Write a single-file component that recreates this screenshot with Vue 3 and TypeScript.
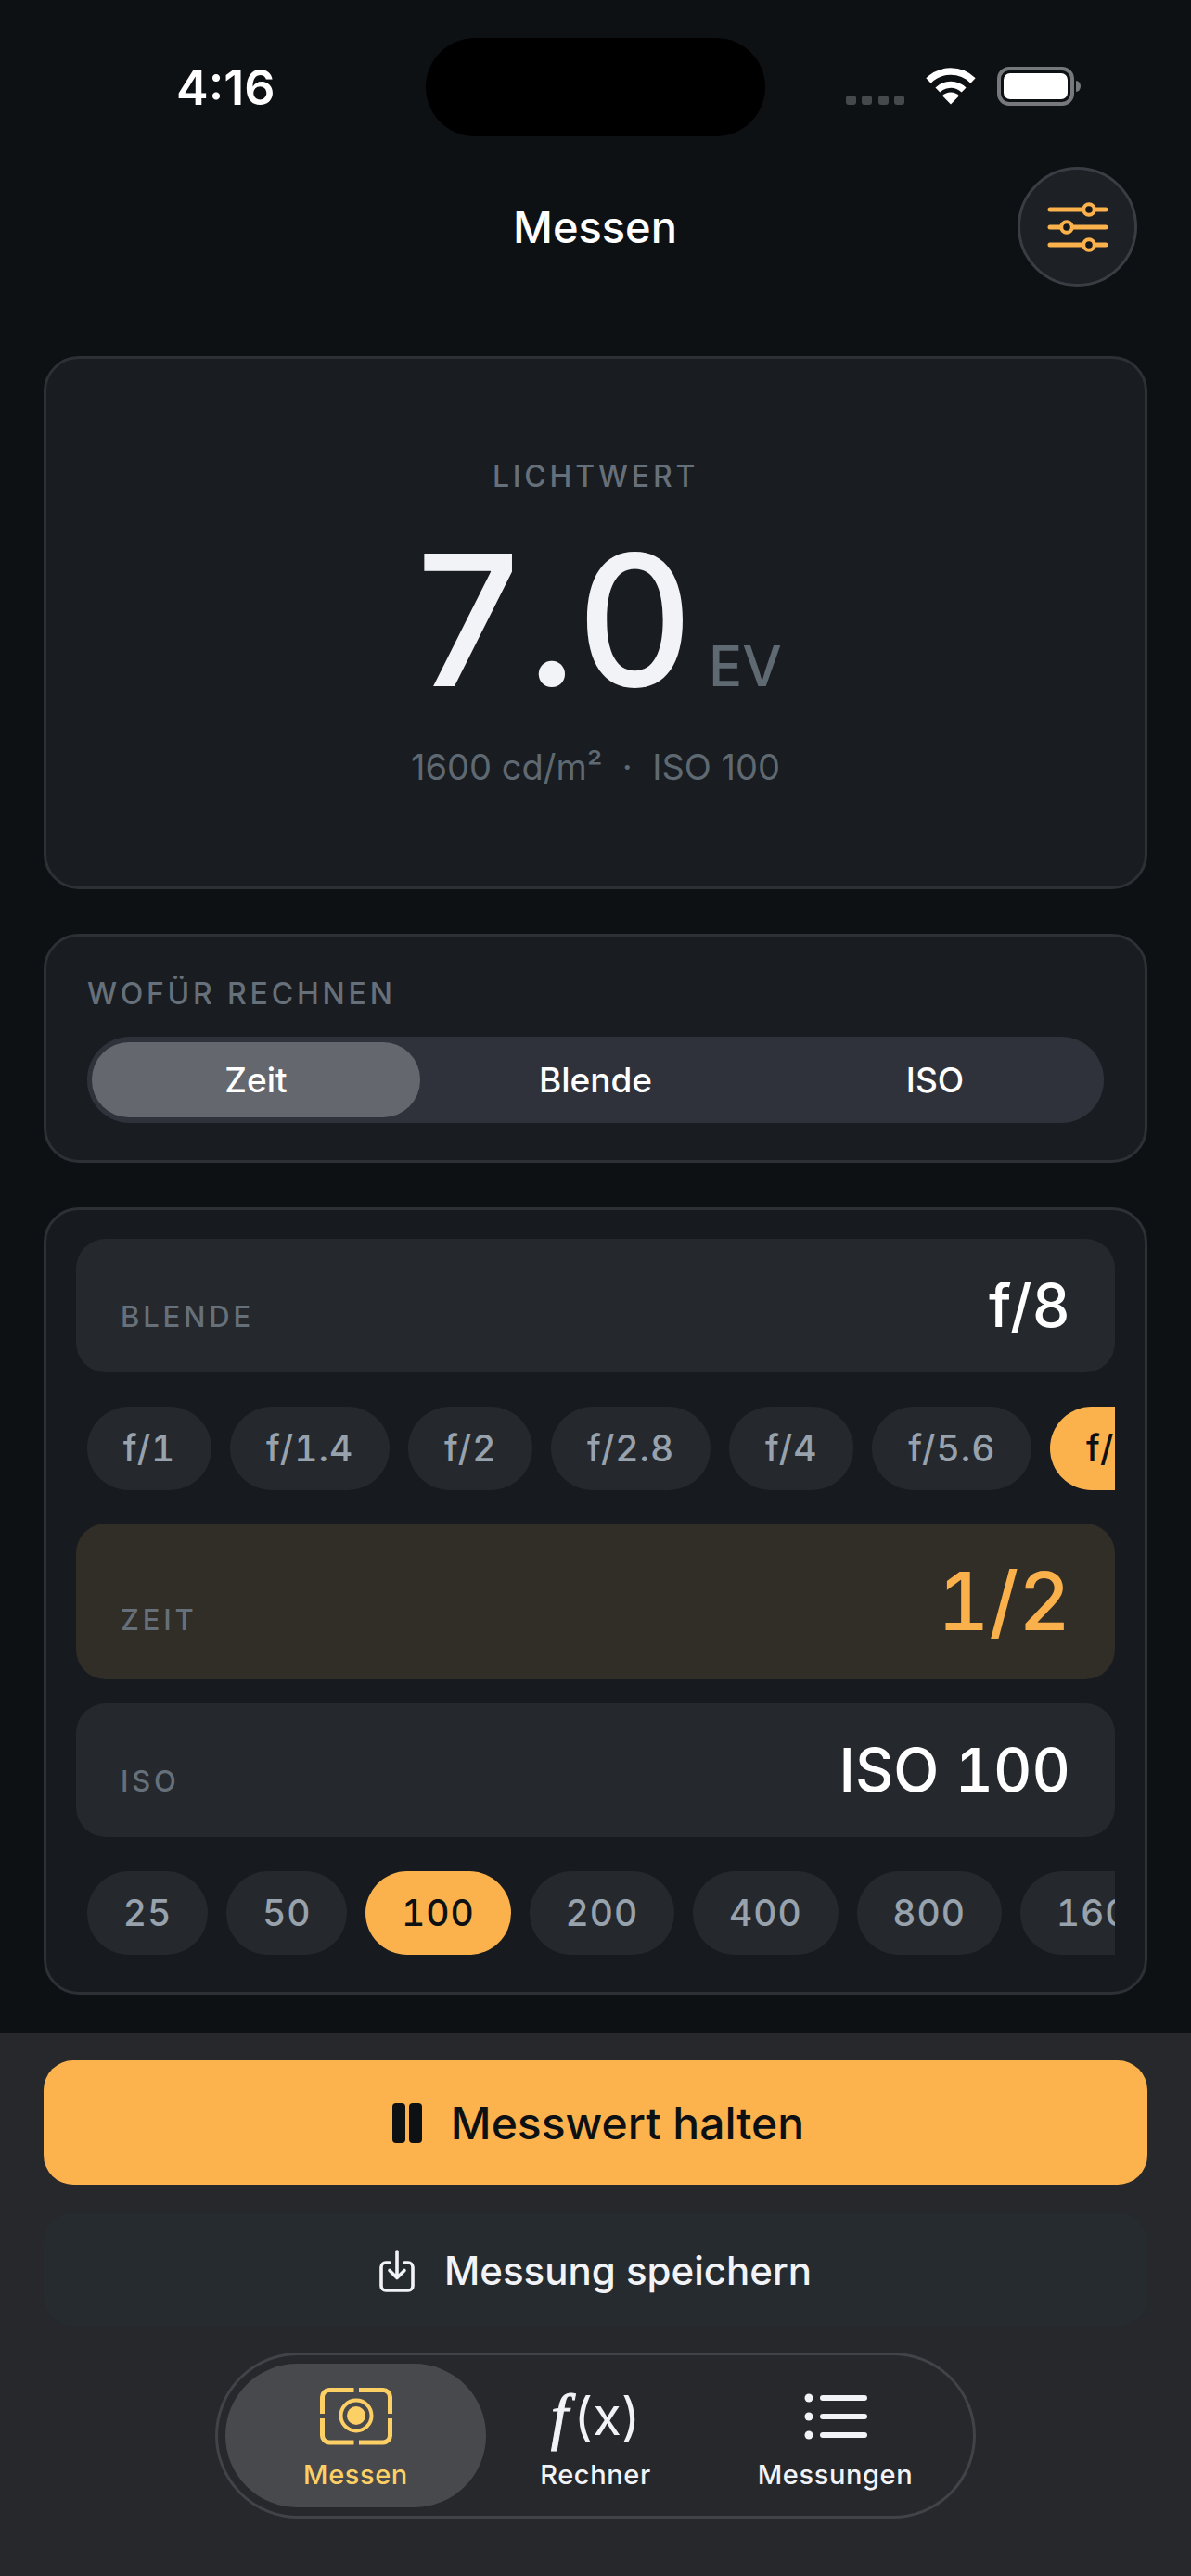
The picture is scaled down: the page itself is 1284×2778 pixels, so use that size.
<script setup lang="ts">
interface Chip {
  label: string;
  active?: boolean;
}

// Values offered below the aperture and ISO rows.
const apertures: Chip[] = [
  { label: 'f/1' },
  { label: 'f/1.4' },
  { label: 'f/2' },
  { label: 'f/2.8' },
  { label: 'f/4' },
  { label: 'f/5.6' },
  { label: 'f/8', active: true },
];

const isoValues: Chip[] = [
  { label: '25' },
  { label: '50' },
  { label: '100', active: true },
  { label: '200' },
  { label: '400' },
  { label: '800' },
  { label: '1600' },
];

const modes = ['Zeit', 'Blende', 'ISO'];
</script>

<template>
  <div class="app">
    <div class="status">
      <span class="time">4:16</span>
      <div class="island"></div>
      <div class="status-icons">
        <div class="signal">
          <i v-for="n in 4" :key="n"></i>
        </div>
        <svg class="wifi" width="56" height="41" viewBox="0 0 56 41" fill="none">
          <path d="M4 15A34 34 0 0 1 52 15" stroke="#fff" stroke-width="7.5" />
          <path d="M13.9 25A20 20 0 0 1 42.1 25" stroke="#fff" stroke-width="7" />
          <path d="M28 40.5L19 31.2A12.8 12.8 0 0 1 37 31.2Z" fill="#fff" />
        </svg>
        <svg class="battery" width="90" height="42" viewBox="0 0 90 42" fill="none">
          <rect x="2" y="2" width="79" height="38" rx="11" stroke="#77787b" stroke-width="4" />
          <rect x="7" y="7" width="69" height="28" rx="7" fill="#fff" />
          <path d="M85 15a5 6 0 0 1 5 6a5 6 0 0 1-5 6Z" fill="#77787b" />
        </svg>
      </div>
    </div>

    <header class="header">
      <span></span>
      <h1 class="title">Messen</h1>
      <button class="settings" aria-label="Einstellungen">
        <svg width="66" height="54" viewBox="0 0 66 54" fill="none">
          <path d="M3 8H63M3 27H63M3 46H63" stroke="#fbb24c" stroke-width="5" stroke-linecap="round" />
          <circle cx="45" cy="8" r="5.800" fill="#15181c" stroke="#fbb24c" stroke-width="4" />
          <circle cx="21" cy="27" r="5.800" fill="#15181c" stroke="#fbb24c" stroke-width="4" />
          <circle cx="45" cy="46" r="5.800" fill="#15181c" stroke="#fbb24c" stroke-width="4" />
        </svg>
      </button>
    </header>

    <main class="content">
      <section class="card hero">
        <div class="caption">LICHTWERT</div>
        <div class="reading">
          <span class="ev">7.0</span>
          <span class="unit">EV</span>
        </div>
        <div class="meta">1600 cd/m²&nbsp; · &nbsp;ISO 100</div>
      </section>

      <section class="card mode">
        <div class="caption">WOFÜR RECHNEN</div>
        <div class="segments">
          <div v-for="(m, i) in modes" :key="m" class="segment" :class="{ on: i === 0 }">{{ m }}</div>
        </div>
      </section>

      <section class="card inputs">
        <div class="row">
          <span class="row-label">BLENDE</span>
          <span class="row-value">f/8</span>
        </div>
        <div class="chips">
          <span v-for="c in apertures" :key="c.label" class="chip" :class="{ on: c.active }">{{ c.label }}</span>
        </div>
        <div class="row result">
          <span class="row-label">ZEIT</span>
          <span class="row-value">1/2</span>
        </div>
        <div class="row">
          <span class="row-label">ISO</span>
          <span class="row-value">ISO 100</span>
        </div>
        <div class="chips">
          <span v-for="c in isoValues" :key="c.label" class="chip" :class="{ on: c.active }">{{ c.label }}</span>
        </div>
      </section>
    </main>

    <footer class="panel">
      <button class="btn hold">
        <span class="pause"><i></i><i></i></span>
        Messwert halten
      </button>
      <button class="btn save">
        <svg width="38" height="46" viewBox="0 0 38 46" fill="none">
          <path d="M11 14H7a5 5 0 0 0-5 5V39a5 5 0 0 0 5 5H31a5 5 0 0 0 5-5V19a5 5 0 0 0-5-5H27" stroke="#f2f3f7" stroke-width="3.600" stroke-linecap="round" />
          <path d="M19 2V30M11 22.500L19 30.500L27 22.500" stroke="#f2f3f7" stroke-width="3.600" stroke-linecap="round" stroke-linejoin="round" />
        </svg>
        Messung speichern
      </button>

      <nav class="tabs">
        <div class="tab on">
          <div class="tab-icon">
            <svg width="78" height="62" viewBox="0 0 78 62" fill="none">
              <path d="M2.500 28V10A7.500 7.500 0 0 1 10 2.500H36.500M42 2.500H68A7.500 7.500 0 0 1 75.500 10V28M75.500 33V51.500A7.500 7.500 0 0 1 68 59H42M36.500 59H10A7.500 7.500 0 0 1 2.500 51.500V33" stroke="#fdd066" stroke-width="5" />
              <circle cx="39" cy="30" r="16.500" stroke="#fdd066" stroke-width="4" />
              <circle cx="39" cy="30" r="10" fill="#fdd066" />
            </svg>
          </div>
          <span class="tab-label">Messen</span>
        </div>
        <div class="tab">
          <div class="tab-icon fx"><span class="fx-f">f</span>(x)</div>
          <span class="tab-label">Rechner</span>
        </div>
        <div class="tab">
          <div class="tab-icon">
            <svg width="68" height="50" viewBox="0 0 68 50" fill="none">
              <circle cx="5" cy="5" r="4.500" fill="#f2f3f7" />
              <circle cx="5" cy="25" r="4.500" fill="#f2f3f7" />
              <circle cx="5" cy="45" r="4.500" fill="#f2f3f7" />
              <path d="M20 5H65M20 25H65M20 45H65" stroke="#f2f3f7" stroke-width="6" stroke-linecap="round" />
            </svg>
          </div>
          <span class="tab-label">Messungen</span>
        </div>
      </nav>
    </footer>
  </div>
</template>

<style>
html,
body {
  background: #0d1114;
}
</style>

<style scoped>
.app {
  width: 1284px;
  height: 2778px;
  display: flex;
  flex-direction: column;
  overflow: hidden;
  background: #0d1114;
  font-family: Inter, "Liberation Sans", sans-serif;
  color: #f2f3f7;
}

.status {
  position: relative;
  height: 180px;
  box-sizing: border-box;
  padding: 68px 119px 0 190px;
  display: flex;
  justify-content: space-between;
  align-items: flex-start;
}

.time {
  font-size: 52px;
  line-height: 53px;
  font-weight: 600;
  color: #fff;
}

.island {
  position: absolute;
  left: 459px;
  top: 41px;
  width: 366px;
  height: 106px;
  border-radius: 53px;
  background: #000;
}

.status-icons {
  margin-top: 4px;
  display: flex;
  gap: 22px;
  align-items: flex-start;
}

.signal {
  margin-top: 31px;
  display: flex;
  gap: 6.5px;
}

.signal i {
  width: 11px;
  height: 10px;
  border-radius: 3px;
  background: #45494c;
}

.header {
  height: 128px;
  padding-right: 58px;
  margin-bottom: 76px;
  display: grid;
  grid-template-columns: 186px 1fr 129px;
  align-items: center;
}

.title {
  margin: 0;
  text-align: center;
  font-size: 47px;
  line-height: 56px;
  font-weight: 500;
  color: #fff;
}

.settings {
  width: 129px;
  height: 129px;
  box-sizing: border-box;
  padding: 0;
  border: 3px solid #3a3e44;
  border-radius: 50%;
  background: #1d2024;
  display: flex;
  align-items: center;
  justify-content: center;
}

.content {
  padding: 0 47px;
  display: flex;
  flex-direction: column;
  gap: 48px;
  font-variant-numeric: tabular-nums;
}

.card {
  box-sizing: border-box;
  border: 3px solid #2d3136;
  border-radius: 38px;
  background: #191c20;
}

.caption {
  font-size: 32px;
  line-height: 40px;
  font-weight: 500;
  letter-spacing: 3.8px;
  color: #66707a;
}

.hero {
  height: 575px;
  padding-top: 107px;
  display: flex;
  flex-direction: column;
  align-items: center;
}

.reading {
  margin-top: 35px;
  height: 200px;
  display: flex;
  align-items: baseline;
  gap: 16px;
}

.ev {
  font-size: 196px;
  line-height: 200px;
  font-weight: 540;
}

.unit {
  font-size: 60px;
  line-height: 62px;
  font-weight: 500;
  color: #5f6972;
}

.meta {
  margin-top: 34px;
  font-size: 38px;
  line-height: 48px;
  font-variant-numeric: normal;
  color: #5f6972;
}

.mode {
  height: 247px;
  padding: 42px 44px 0;
}

.segments {
  margin-top: 26px;
  height: 93px;
  box-sizing: border-box;
  padding: 6px 5px;
  border-radius: 46px;
  background: #2f323a;
  display: grid;
  grid-template-columns: repeat(3, 1fr);
  gap: 12px;
}

.segment {
  border-radius: 40px;
  text-align: center;
  font-size: 37px;
  line-height: 81px;
  font-weight: 450;
  color: #fff;
}

.segment.on {
  background: #64676e;
}

.inputs {
  height: 849px;
  padding: 31px 32px;
  background: #171a1f;
  display: flex;
  flex-direction: column;
  gap: 26px;
}

.row {
  height: 144px;
  flex: none;
  box-sizing: border-box;
  padding: 12px 48px 0;
  border-radius: 32px;
  background: #25292d;
  display: flex;
  justify-content: space-between;
  align-items: baseline;
}

.row-label {
  font-size: 31px;
  line-height: 40px;
  font-weight: 500;
  letter-spacing: 3.8px;
  color: #66707a;
}

.row-value {
  font-size: 64px;
  line-height: 120px;
  font-weight: 450;
  color: #fff;
}

.result {
  height: 168px;
  padding-top: 6px;
  background: #312d27;
}

.result .row-value {
  font-size: 86px;
  line-height: 156px;
  font-weight: 500;
  color: #fab14c;
}

.chips {
  flex: none;
  padding: 11px 0 10px 12px;
  display: flex;
  gap: 20px;
  overflow: hidden;
}

.chip {
  flex: none;
  height: 90px;
  padding: 0 38.800px;
  border-radius: 45px;
  background: #25292d;
  font-size: 39px;
  line-height: 90px;
  font-weight: 450;
  letter-spacing: 1px;
  color: #98a2ad;
}

.chip.on {
  background: #fbb24c;
  color: #0d1114;
}

.panel {
  margin-top: auto;
  height: 586px;
  box-sizing: border-box;
  padding: 30px 47px 0;
  background: #26282b;
  display: flex;
  flex-direction: column;
}

.btn {
  border: none;
  padding: 0;
  display: flex;
  align-items: center;
  justify-content: center;
  font-family: inherit;
  font-weight: 450;
}

.hold {
  height: 134px;
  padding-left: 6px;
  gap: 31px;
  border-radius: 32px;
  background: #fcb24d;
  color: #0d1114;
  font-size: 48px;
  font-weight: 550;
}

.pause {
  display: flex;
  gap: 4px;
}

.pause i {
  width: 14px;
  height: 43px;
  border-radius: 4px;
  background: #0d1114;
}

.save {
  margin-top: 30px;
  height: 123px;
  padding-top: 2px;
  gap: 32px;
  border-radius: 32px;
  background: #262b2f;
  color: #f2f3f7;
  font-size: 42px;
}

.tabs {
  margin: 28px auto 0;
  width: 820px;
  height: 179px;
  box-sizing: border-box;
  padding: 9px 8px;
  border: 3px solid #404347;
  border-radius: 90px;
  background: #27282c;
  display: grid;
  grid-template-columns: 281px 1fr 281px;
}

.tab {
  padding-top: 26px;
  border-radius: 78px;
  display: flex;
  flex-direction: column;
  align-items: center;
}

.tab.on {
  background: #48494d;
}

.tab-icon {
  height: 62px;
  display: flex;
  align-items: center;
  justify-content: center;
}

.fx {
  font-size: 56px;
  line-height: 62px;
}

.fx-f {
  font-family: "Liberation Serif", serif;
  font-style: italic;
  font-size: 68px;
  margin-right: 6px;
  -webkit-text-stroke: 1px #f2f3f7;
}

.tab-label {
  margin-top: 14px;
  font-size: 29px;
  line-height: 36px;
  font-weight: 450;
  letter-spacing: 0.6px;
  color: #f2f3f7;
}

.tab.on .tab-label {
  color: #fdd066;
}
</style>
